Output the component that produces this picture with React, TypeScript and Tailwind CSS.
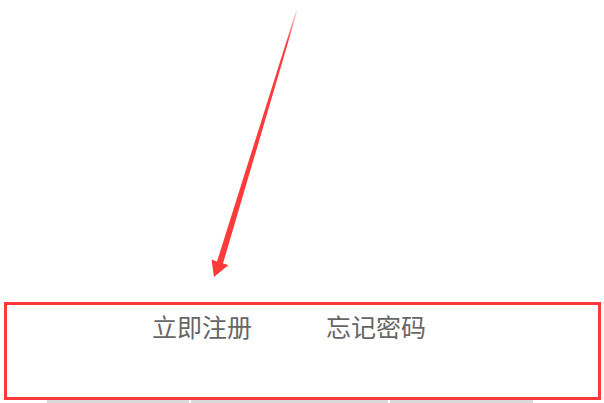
const Arrow = () => (
  <svg width="604" height="302" viewBox="0 0 604 302" className="block">
    <defs>
      <linearGradient id="fade" x1="296" y1="11" x2="214" y2="277" gradientUnits="userSpaceOnUse">
        <stop offset="0" stopColor="#ff3a3a" stopOpacity="0.2" />
        <stop offset="0.12" stopColor="#ff3a3a" stopOpacity="1" />
        <stop offset="1" stopColor="#ff3a3a" stopOpacity="1" />
      </linearGradient>
    </defs>
    <polygon
      points="296,11 297,12 223,263.5 228.5,265 214,277 211.5,259.5 217,261.5"
      fill="url(#fade)"
    />
  </svg>
);

export default function App() {
  return (
    <div
      className="w-[604px] h-[403px] bg-white overflow-hidden"
      style={{ fontFamily: '"Noto Sans CJK SC", "Noto Sans", sans-serif' }}
    >
      <Arrow />
      <div className="ml-[4px] w-[597px] h-[98px] border-[3px] border-[#ff3a3a]">
        <div className="flex pl-[145px] pt-[5px] gap-[74px] text-[25px] leading-[32px] text-[#666666]">
          <span>立即注册</span>
          <span>忘记密码</span>
        </div>
      </div>
      <div className="flex gap-[2px] pl-[47px] h-[3px]">
        <div className="w-[142px] bg-[#d9d9d9]" />
        <div className="w-[197px] bg-[#d9d9d9]" />
        <div className="w-[143px] bg-[#d9d9d9]" />
      </div>
    </div>
  );
}
